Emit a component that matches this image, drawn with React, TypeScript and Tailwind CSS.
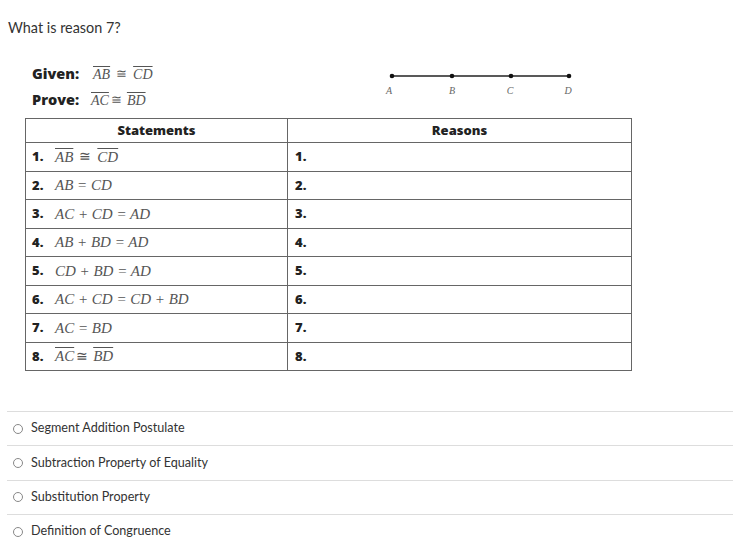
import React from "react";

const M = ({ children, bar, size = "text-[14px]" }: { children: React.ReactNode; bar?: boolean; size?: string }) => (
  <span
    className={
      "font-['Liberation_Serif',serif] italic text-[#555] " +
      size +
      (bar ? " overline decoration-[#555] decoration-1" : "")
    }
  >
    {children}
  </span>
);

const T = "text-[15px]";

const rows: React.ReactNode[] = [
  <>
    <M bar size={T}>AB</M>
    <span className="mx-[6px] font-['Liberation_Serif',serif] text-[#555] text-[14px]">≅</span>
    <M bar size={T}>CD</M>
  </>,
  <M size={T}>AB = CD</M>,
  <M size={T}>AC + CD = AD</M>,
  <M size={T}>AB + BD = AD</M>,
  <M size={T}>CD + BD = AD</M>,
  <M size={T}>AC + CD = CD + BD</M>,
  <M size={T}>AC = BD</M>,
  <>
    <M bar size={T}>AC</M>
    <span className="mx-[2px] font-['Liberation_Serif',serif] text-[#555] text-[14px]">≅</span>
    <span className="ml-[3px]" />
    <M bar size={T}>BD</M>
  </>,
];

const answers = [
  "Segment Addition Postulate",
  "Subtraction Property of Equality",
  "Substitution Property",
  "Definition of Congruence",
];

export default function App() {
  return (
    <div className="w-[733px] h-[555px] bg-white overflow-hidden font-['Lato',sans-serif] text-[#333]">
      <p className="pt-[19px] pl-[8px] text-[14.4px] leading-[18px] text-[#333]">What is reason 7?</p>

      <div className="flex mt-[24px]">
        <div className="w-[385px] pl-[32px]">
          <div className="h-[26px] flex items-center">
            <span className="font-['Open_Sans',sans-serif] font-extrabold text-[14.5px] text-[#222] w-[61px]">Given:</span>
            <M bar>AB</M>
            <span className="mx-[6px] font-['Liberation_Serif',serif] text-[#555] text-[13px]">≅</span>
            <M bar>CD</M>
          </div>
          <div className="h-[26px] flex items-center">
            <span className="font-['Open_Sans',sans-serif] font-extrabold text-[14.5px] text-[#222] w-[59px]">Prove:</span>
            <M bar>AC</M>
            <span className="mx-[2px] font-['Liberation_Serif',serif] text-[#555] text-[13px]">≅</span>
            <span className="ml-[3px]" />
            <M bar>BD</M>
          </div>
        </div>
        <svg width="200" height="40" viewBox="0 0 200 40">
          <line x1="7" y1="15" x2="184" y2="15" stroke="#222" strokeWidth="1.3" />
          {[7, 67, 126, 184].map((x) => (
            <circle key={x} cx={x} cy="15" r="2.3" fill="#111" />
          ))}
          {[
            ["A", 4],
            ["B", 67],
            ["C", 125],
            ["D", 183],
          ].map(([t, x]) => (
            <text
              key={t as string}
              x={x as number}
              y="33"
              textAnchor="middle"
              fontFamily="Liberation Serif, serif"
              fontStyle="italic"
              fontSize="10"
              fill="#666"
            >
              {t}
            </text>
          ))}
        </svg>
      </div>

      <table className="ml-[25px] mt-[5px] w-[607px] border-collapse font-['Open_Sans',sans-serif] text-[13px] text-[#222]">
        <thead>
          <tr className="h-[24px]">
            <th className="w-[262px] border-[1.5px] border-[#666] font-extrabold p-0">Statements</th>
            <th className="border-[1.5px] border-[#666] font-extrabold p-0">Reasons</th>
          </tr>
        </thead>
        <tbody>
          {rows.map((r, i) => (
            <tr key={i} className="h-[28.5px]">
              <td className={"border-[1.5px] border-[#666] p-0 pl-[6px] " + (i === 7 ? "border-2 border-[#444]" : "")}>
                <div className="flex items-center">
                  <span className="font-extrabold w-[23px]">{i + 1}.</span>
                  {r}
                </div>
              </td>
              <td className={"border-[1.5px] border-[#666] p-0 pl-[7px] font-extrabold " + (i === 7 ? "border-2 border-[#444]" : "")}>
                {i + 1}.
              </td>
            </tr>
          ))}
        </tbody>
      </table>

      <div className="mt-[40px] ml-[7px]">
        {answers.map((a) => (
          <div key={a} className="h-[34.3px] border-t border-[#ddd] flex items-center">
            <span className="ml-[6px] w-[10px] h-[10px] rounded-full border border-[#888] bg-white" />
            <span className="ml-[8px] text-[12.6px] text-[#333]">{a}</span>
          </div>
        ))}
      </div>
    </div>
  );
}
